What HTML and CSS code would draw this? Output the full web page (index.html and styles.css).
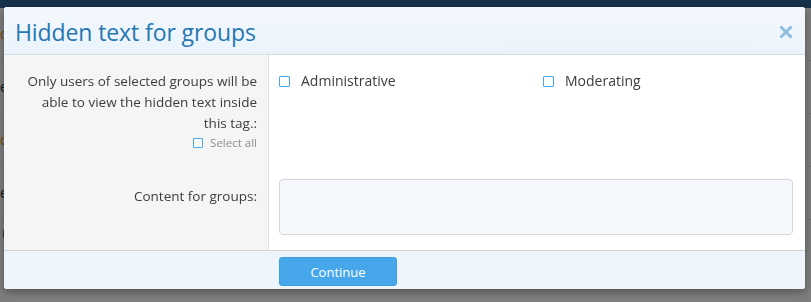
FILE: index.html
```html
<!DOCTYPE html>
<html lang="en">
<head>
  <meta charset="UTF-8" />
  <title>Hidden text for groups</title>
  <link rel="stylesheet" href="styles.css">
</head>
<body>
  <div class="page">
    <div class="page-nav"></div>
    <div class="page-row"><span class="tag">d</span></div>
    <div class="page-row"><span>e</span></div>
    <div class="page-row"><span class="tag">d</span></div>
    <div class="page-row"><span>e</span></div>
    <div class="page-links">Forum · Edit · Delete · IP</div>
  </div>

  <div class="overlay">
    <div class="dialog">
      <div class="dialog-head">
        <h2 class="dialog-title">Hidden text for groups</h2>
        <svg class="dialog-close" viewBox="0 0 14 14"><path d="M1.5 1.5l11 11M12.5 1.5l-11 11"/></svg>
      </div>

      <div class="form-row form-row--groups">
        <div class="form-label">
          Only users of selected groups will be able to view the hidden text inside <span class="nowrap">this tag.:</span>
          <label class="select-all"><span class="box"></span>Select all</label>
        </div>
        <div class="form-input">
          <ul class="check-list">
            <li><span class="box"></span>Administrative</li>
            <li><span class="box"></span>Moderating</li>
          </ul>
        </div>
      </div>

      <div class="form-row">
        <div class="form-label form-label--content">Content for groups:</div>
        <div class="form-input">
          <textarea class="text-box"></textarea>
        </div>
      </div>

      <div class="dialog-foot">
        <button class="button">Continue</button>
      </div>
    </div>
  </div>
</body>
</html>
```

FILE: styles.css
```css
body {
  margin: 0;
  font-family: 'Open Sans', 'Noto Sans', sans-serif;
  background: #7e7e7e;
  overflow: hidden;
}
.page {
  height: 302px;
}
.page-nav {
  height: 8px;
  background: #17324b;
}
.page-row {
  height: 52px;
  border-bottom: 1px solid #747474;
  font-size: 14px;
  line-height: 52px;
  color: #111;
}
.page-row .tag {
  color: #7a4a10;
}
.page-links {
  padding: 6px 0 0 2px;
  font-size: 11px;
  color: #10293f;
}
.overlay {
  position: fixed;
  inset: 0;
}
.dialog {
  position: absolute;
  top: 7px;
  left: 4px;
  width: 801px;
  height: 282px;
  background: #fff;
  border-radius: 3px;
  box-shadow: 0 3px 8px rgba(0,0,0,0.35);
  overflow: hidden;
  display: flex;
  flex-direction: column;
}
.dialog-head {
  height: 48px;
  padding: 2px 12px 0 11px;
  background: linear-gradient(to bottom, #f4f8fd, #eaf3fc);
  border-bottom: 1px solid #d6dde4;
  display: flex;
  align-items: center;
  justify-content: space-between;
  box-sizing: border-box;
}
.dialog-title {
  margin: 0;
  font-size: 23px;
  font-weight: 400;
  color: #2577b1;
  letter-spacing: -0.1px;
}
.dialog-close {
  width: 14px;
  height: 14px;
  stroke: #8fbde0;
  stroke-width: 3;
  fill: none;
}
.form-row {
  display: grid;
  grid-template-columns: 265px 1fr;
}
.form-label {
  background: #f5f5f5;
  border-right: 1px solid #e0e0e0;
  padding: 16px 11px 0 10px;
  text-align: right;
  font-size: 13.5px;
  line-height: 21px;
  color: #3d3d3d;
  box-sizing: border-box;
}
.nowrap {
  white-space: nowrap;
}
.form-row--groups {
  height: 114px;
}
.form-label--content {
  padding-top: 17px;
}
.select-all {
  display: flex;
  justify-content: flex-end;
  align-items: center;
  gap: 7px;
  margin-top: 1px;
  font-size: 11.5px;
  line-height: 16px;
  color: #8c8c8c;
}
.select-all .box {
  width: 8px;
  height: 8px;
}
.form-input {
  padding: 10px 12px 15px 10px;
}
.form-row--groups .form-input {
  padding-top: 11px;
}
.check-list {
  list-style: none;
  margin: 0;
  padding: 5px 0 0;
  display: grid;
  grid-template-columns: 264px 1fr;
}
.check-list li {
  display: flex;
  align-items: center;
  gap: 11px;
  font-size: 14px;
  line-height: 20px;
  color: #3d3d3d;
}
.box {
  width: 9px;
  height: 9px;
  border: 1.5px solid #47a7eb;
  border-radius: 1px;
  background: #fff;
  display: inline-block;
}
.text-box {
  display: block;
  width: 100%;
  height: 56px;
  box-sizing: border-box;
  background: #f5f9fd;
  border: 1px solid #d8d8d8;
  border-radius: 4px;
  resize: none;
}
.dialog-foot {
  flex: 1;
  background: #edf4fc;
  border-top: 1px solid #d3d3d3;
  padding: 6px 0 0 275px;
}
.button {
  width: 118px;
  height: 29px;
  background: #47a7eb;
  border: 1px solid #3f9ddf;
  border-radius: 3px;
  color: #fff;
  font-family: inherit;
  font-size: 13px;
}
```
